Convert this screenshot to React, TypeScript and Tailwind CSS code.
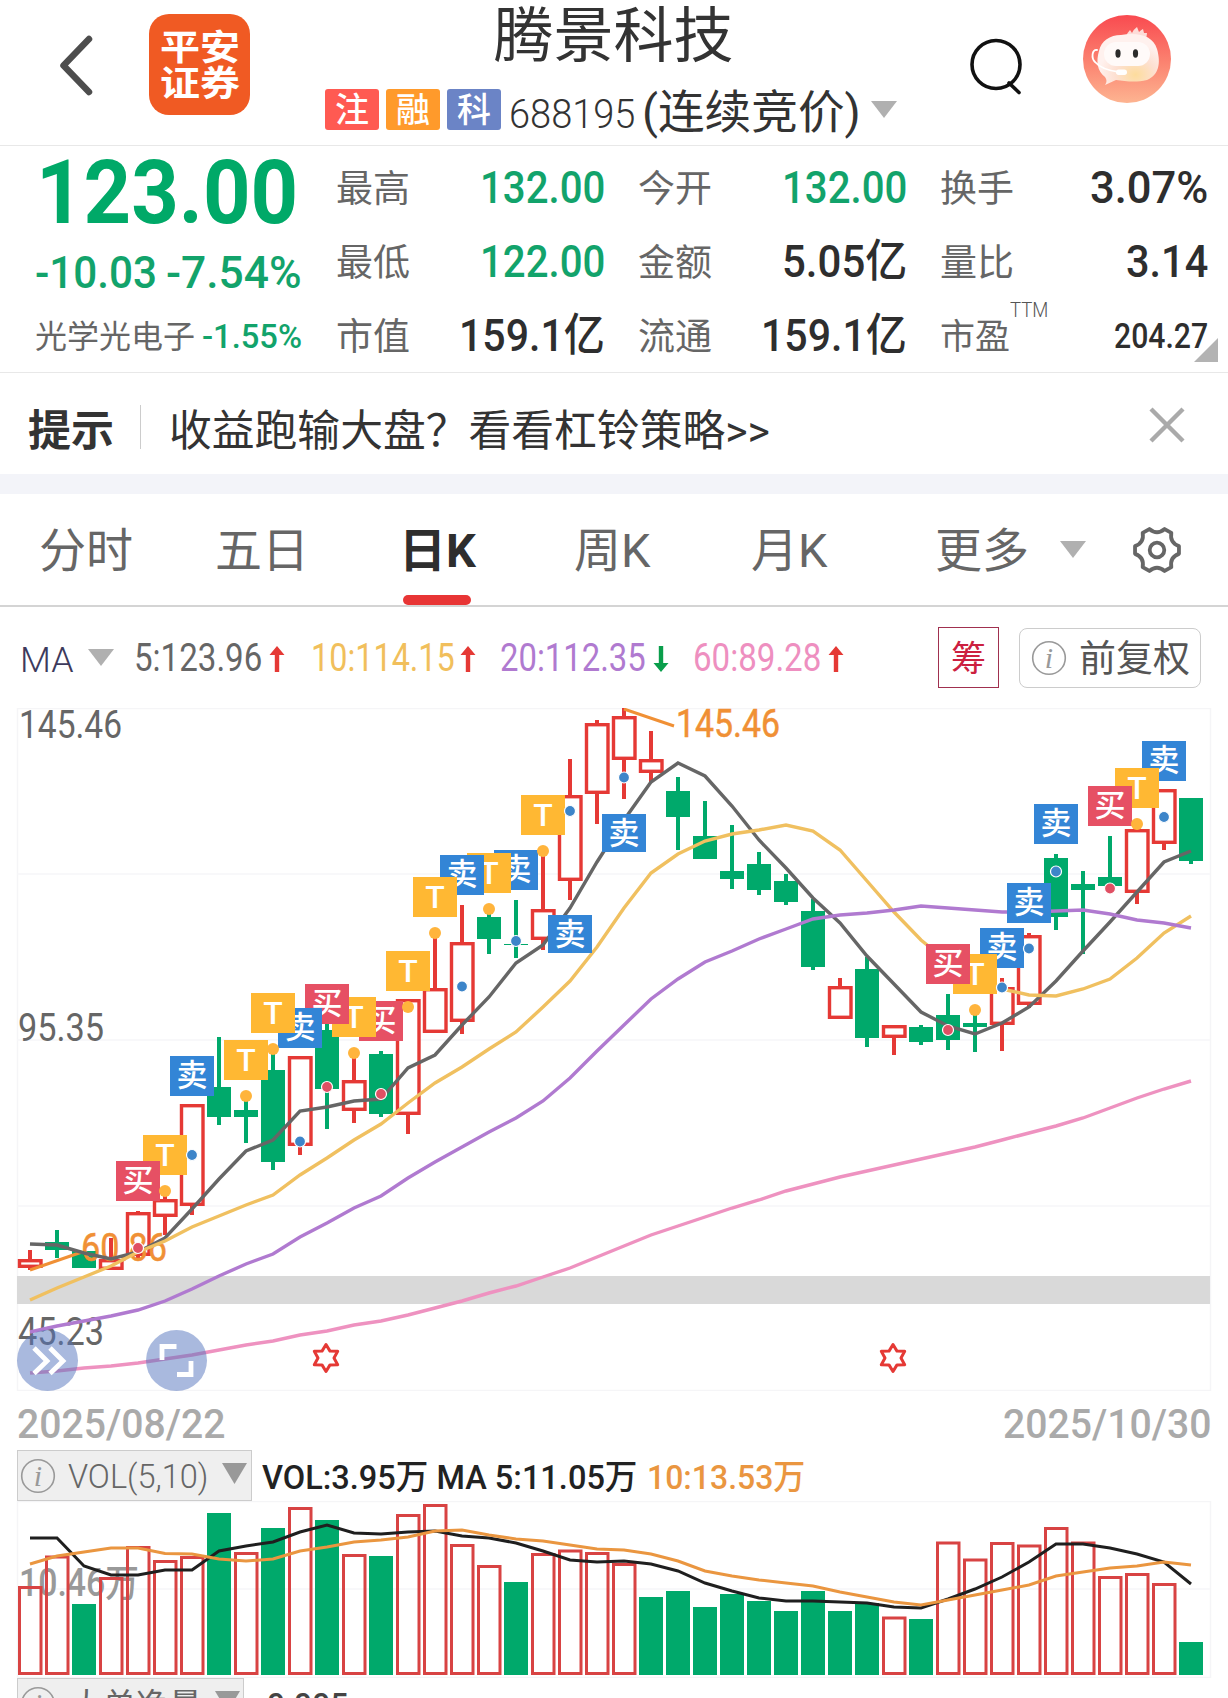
import React, { useLayoutEffect, useRef } from "react";

const FONT = 'Roboto, "Noto Sans CJK SC", sans-serif';

const RED = "#e53935";
const GREEN = "#00a96b";
const STEP = 27;
const FIRST_X = 30;

const cx = (i: number) => FIRST_X + i * STEP;

type Candle = ["r" | "g", number, number, number, number]; // color, body top, body bottom, high, low
type Mark = [number, "buy" | "sell" | "T", number, number?];

const candles: Candle[] = [
  ["r", 1259, 1268, 1250, 1270],
  ["g", 1242, 1250, 1230, 1258],
  ["g", 1251, 1268, 1251, 1268],
  ["r", 1259, 1270, 1238, 1270],
  ["r", 1212, 1256, 1211, 1258],
  ["r", 1199, 1217, 1190, 1235],
  ["r", 1104, 1206, 1104, 1215],
  ["g", 1087, 1117, 1037, 1125],
  ["g", 1110, 1117, 1096, 1143],
  ["g", 1070, 1162, 1049, 1170],
  ["r", 1056, 1146, 1056, 1155],
  ["g", 1030, 1089, 1024, 1129],
  ["r", 1080, 1111, 1053, 1123],
  ["g", 1054, 1114, 1051, 1117],
  ["r", 999, 1115, 999, 1134],
  ["r", 988, 1033, 933, 1033],
  ["r", 942, 1022, 905, 1034],
  ["g", 917, 939, 910, 954],
  ["g", 944, 945, 900, 958],
  ["r", 909, 940, 851, 950],
  ["r", 795, 881, 759, 900],
  ["r", 723, 794, 720, 824],
  ["r", 716, 760, 708, 799],
  ["r", 759, 773, 731, 782],
  ["g", 791, 817, 777, 850],
  ["g", 836, 859, 801, 859],
  ["g", 871, 879, 825, 889],
  ["g", 864, 890, 852, 895],
  ["g", 881, 902, 874, 905],
  ["g", 911, 967, 899, 970],
  ["r", 986, 1019, 978, 1019],
  ["g", 969, 1038, 957, 1047],
  ["r", 1025, 1038, 1025, 1055],
  ["g", 1027, 1042, 1025, 1045],
  ["g", 1015, 1040, 994, 1050],
  ["g", 1023, 1027, 1010, 1052],
  ["r", 987, 1025, 978, 1051],
  ["r", 935, 1005, 933, 1008],
  ["g", 858, 917, 854, 930],
  ["g", 884, 890, 871, 954],
  ["g", 877, 886, 836, 890],
  ["r", 829, 893, 824, 904],
  ["r", 789, 844, 789, 850],
  ["g", 798, 861, 798, 864],
];

const ma5 = [1244, 1245, 1253, 1259, 1252, 1238, 1209, 1179, 1151, 1140, 1111, 1107, 1101, 1099, 1068, 1055, 1025, 997, 963, 945, 908, 862, 820, 782, 763, 776, 806, 840, 868, 898, 923, 956, 984, 1012, 1026, 1034, 1023, 1007, 981, 951, 922, 892, 862, 851];
const ma10 = [1300, 1288, 1277, 1266, 1252, 1241, 1227, 1216, 1205, 1195, 1175, 1158, 1140, 1124, 1103, 1083, 1067, 1049, 1032, 1007, 981, 947, 908, 873, 854, 841, 834, 830, 825, 831, 850, 881, 912, 940, 962, 978, 989, 995, 996, 989, 979, 958, 933, 916];
const ma20 = [1332, 1326, 1321, 1316, 1310, 1301, 1289, 1276, 1264, 1254, 1237, 1223, 1208, 1196, 1178, 1162, 1147, 1132, 1118, 1101, 1078, 1051, 1025, 999, 979, 962, 951, 939, 929, 919, 915, 913, 910, 906, 908, 910, 912, 912, 911, 910, 914, 920, 923, 928];
const ma60 = [1373, 1371, 1368, 1366, 1363, 1359, 1355, 1350, 1345, 1341, 1335, 1331, 1325, 1321, 1315, 1308, 1301, 1293, 1286, 1277, 1268, 1257, 1246, 1235, 1226, 1217, 1208, 1200, 1191, 1184, 1177, 1171, 1165, 1159, 1153, 1147, 1140, 1133, 1126, 1118, 1108, 1098, 1089, 1081];

// candle index, kind, dot y
const dots: [number, "buy" | "sell" | "T", number][] = [
  [4, "buy", 1248], [5, "T", 1191], [6, "sell", 1155], [8, "T", 1096], [9, "T", 1049], [10, "sell", 1141.5],
  [11, "buy", 1087], [12, "T", 1053], [13, "buy", 1094], [14, "T", 1007], [15, "T", 933], [16, "sell", 986.5],
  [17, "T", 909], [18, "sell", 941], [19, "T", 851], [20, "sell", 811], [22, "sell", 777.5],
  [34, "buy", 1030], [35, "T", 1010], [36, "sell", 987.5], [37, "sell", 948.5], [38, "sell", 871.5],
  [40, "buy", 888.5], [41, "T", 824], [42, "sell", 817],
];

// candle index, kind, badge top, badge height; later ones lie on top
const marks: Mark[] = [
  [42, "sell", 741], [41, "T", 768], [40, "buy", 786], [38, "sell", 804], [37, "sell", 883],
  [36, "sell", 928], [35, "T", 954], [34, "buy", 944], [22, "sell", 814, 38], [20, "sell", 915, 38],
  [19, "T", 795], [18, "sell", 850], [17, "T", 853], [16, "sell", 855], [15, "T", 877], [14, "T", 951],
  [13, "buy", 1001], [12, "T", 997], [11, "buy", 984], [10, "sell", 1008], [9, "T", 993], [8, "T", 1040],
  [6, "sell", 1056], [5, "T", 1135], [4, "buy", 1161],
];

const dotColor = { buy: "#e05064", sell: "#3d85c9", T: "#ffb43c" };
const markColor = { buy: "#e65064", sell: "#3385d6", T: "#ffb833" };
const markText = { buy: "买", sell: "卖", T: "T" };

const volumeTop = [1586, 1555.5, 1604, 1577, 1546, 1560, 1556, 1513, 1552, 1528, 1507, 1520, 1554, 1556, 1514, 1504, 1544, 1565, 1582, 1553, 1549.5, 1552, 1563, 1597, 1591, 1607, 1594, 1601, 1611, 1591, 1611, 1603, 1616.5, 1619, 1541.5, 1558.5, 1542, 1544.5, 1527, 1541.5, 1576, 1573, 1583, 1642];
const volumeKind = "rrgrrrrgrgrgrgrrrrgrrrrgggggggggrgrrrrrrrrrg";
const vol5 = [1538, 1538, 1566, 1575, 1575, 1570, 1570, 1551, 1546, 1542, 1532, 1525, 1533, 1534, 1532, 1531, 1536, 1538, 1543, 1551, 1560, 1562, 1561, 1564, 1571, 1583, 1591, 1598, 1601, 1601, 1602, 1603, 1607, 1608, 1599, 1589, 1577, 1562, 1544, 1544, 1548, 1554, 1562, 1584];
const vol10 = [1564, 1556, 1552, 1548, 1548, 1553.5, 1554, 1559, 1561, 1559, 1551, 1547, 1542, 1540, 1537, 1531, 1530, 1535, 1539, 1541, 1545, 1549, 1550, 1554, 1561, 1571, 1576, 1580, 1583, 1586, 1592, 1597, 1602, 1605, 1600, 1595, 1590, 1585, 1576, 1572, 1568, 1566, 1562, 1565];

const toPoints = (ys: number[]) => ys.map((y, i) => `${cx(i)},${y}`).join(" ");

// one line of text squeezed to a given width
const Fit: React.FC<{ w: number; className?: string; children: string }> = ({ w, className = "", children }) => {
  const ref = useRef<HTMLSpanElement>(null);
  useLayoutEffect(() => {
    const el = ref.current;
    if (el) el.style.transform = `scaleX(${w / el.offsetWidth})`;
  }, [w, children]);
  return (
    <span className="inline-block shrink-0" style={{ width: w }}>
      <span ref={ref} className={`inline-block origin-left whitespace-pre leading-none ${className}`}>
        {children}
      </span>
    </span>
  );
};

const Triangle: React.FC<{ className?: string }> = ({ className = "" }) => (
  <svg viewBox="0 0 26 17" preserveAspectRatio="none" className={`shrink-0 ${className}`}>
    <path d="M0 0H26L13 17Z" fill="currentColor" />
  </svg>
);

const Info: React.FC<{ className?: string }> = ({ className = "" }) => (
  <svg viewBox="0 0 36 36" className={`h-9 w-9 shrink-0 ${className}`}>
    <circle cx="18" cy="18" r="16.3" fill="none" stroke="#999" strokeWidth="1.6" />
    <text x="18" y="27.5" textAnchor="middle" fontSize="30" fontStyle="italic" fill="#999" fontFamily='"Liberation Serif", serif'>
      i
    </text>
  </svg>
);

const Arrow: React.FC<{ down?: boolean }> = ({ down }) => (
  <svg viewBox="0 0 16 26" className={`h-[26px] w-4 shrink-0 ${down ? "rotate-180" : ""}`}>
    <path d="M8 0L15.5 9H10.2V26H5.8V9H0.5Z" fill={down ? "#0a9e4b" : RED} />
  </svg>
);

const gearPath = () => {
  const p = (deg: number, r: number) => {
    const a = (deg * Math.PI) / 180;
    return `${(25 + r * Math.cos(a)).toFixed(2)} ${(25 + r * Math.sin(a)).toFixed(2)}`;
  };
  let d = `M${p(-10, 22.3)}`;
  for (let t = 0; t < 360; t += 60) {
    d += `L${p(t + 10, 22.3)}Q${p(t + 30, 14.5)} ${p(t + 50, 22.3)}`;
  }
  return d + "Z";
};

const Robot = () => (
  <svg viewBox="0 0 88 88" className="h-[88px] w-[88px]">
    <defs>
      <linearGradient id="robotBg" x1="0" y1="0" x2="0" y2="1">
        <stop offset="0" stopColor="#f94a50" />
        <stop offset="0.55" stopColor="#fb8471" />
        <stop offset="1" stopColor="#fdb491" />
      </linearGradient>
      <radialGradient id="robotFace" cx="0.62" cy="0.8" r="0.6">
        <stop offset="0" stopColor="#fddc9c" />
        <stop offset="0.55" stopColor="#fde0d2" />
        <stop offset="1" stopColor="#fff1ee" />
      </radialGradient>
    </defs>
    <circle cx="44" cy="44" r="44" fill="url(#robotBg)" />
    <path d="M43 21Q45 17 47 15L49 18Q51 14 54 12L56 17Q58 15 60 14L61 18L64 18Q64 22 62 25Z" fill="#fddcd8" />
    <path d="M38 20C56 17 70 21 74 34C78 48 76 60 64 65C52 68 42 66 33 65L22 70Q25 66 22 62C14 56 13 46 16 36C18 26 27 20 38 20Z" fill="url(#robotFace)" />
    <rect x="21" y="27" width="46" height="24" rx="12" fill="#fffaf9" />
    <ellipse cx="35" cy="38.5" rx="2.6" ry="4.2" fill="#2b2b2b" />
    <ellipse cx="52.5" cy="38.5" rx="2.6" ry="4.2" fill="#2b2b2b" />
    <path d="M14 35C9 34 8 43 12 47C18 54 28 56 36 57" fill="none" stroke="#fff" strokeWidth="1.8" strokeLinecap="round" />
    <rect x="33" y="54.5" width="11" height="5.5" rx="2.7" fill="#fff" />
  </svg>
);

const Header = () => (
  <header className="flex h-[146px] border-b border-[#e8e8e8]">
    <div className="flex w-[325px] items-start">
      <svg viewBox="0 0 40 64" className="ml-[56px] mt-[34px] h-16 w-10">
        <path d="M33 5L7.5 31.5L33 58" fill="none" stroke="#4d4d4d" strokeWidth="6.5" strokeLinecap="round" strokeLinejoin="round" />
      </svg>
      <div className="ml-[53px] mt-[14px] flex h-[101px] w-[101px] items-center justify-center rounded-[20px] bg-[#f05a23]">
        <div className="scale-y-[0.88] pt-[3px] pl-px text-[40px] font-bold leading-[41px] text-white">
          <div>平安</div>
          <div>证券</div>
        </div>
      </div>
    </div>
    <div className="flex w-[577px] flex-col">
      <div className="flex h-[74px] justify-center pt-0.5 text-[60px] leading-[70px] text-[#333]">腾景科技</div>
      <div className="flex h-[71px] items-center">
        <div className="flex gap-[7px] text-[34px] font-medium leading-[43px] text-white">
          <span className="flex h-[41px] w-[54px] justify-center rounded-[3px] bg-[#ff5a52]">注</span>
          <span className="flex h-[41px] w-[54px] justify-center rounded-[3px] bg-[#ff9a2b]">融</span>
          <span className="flex h-[41px] w-[54px] justify-center rounded-[3px] bg-[#6b84c6]">科</span>
        </div>
        <div className="ml-[8px] flex items-center pt-[9px]">
          <Fit w={126} className="text-[41px] font-light text-[#333]">688195</Fit>
        </div>
        <div className="ml-[7px] flex items-center pt-[5px]">
          <Fit w={219} className="text-[46px] text-[#333]">(连续竞价)</Fit>
        </div>
        <Triangle className="ml-[10px] h-[17px] w-[26px] text-[#b0b0b0]" />
      </div>
    </div>
    <div className="flex flex-1 items-start">
      <svg viewBox="0 0 60 60" className="ml-[65px] mt-[36px] h-[60px] w-[60px]">
        <circle cx="29" cy="28.5" r="24" fill="none" stroke="#111" strokeWidth="3.6" />
        <path d="M42 47L52 56.5" stroke="#111" strokeWidth="3.6" strokeLinecap="round" />
      </svg>
      <div className="ml-[56px] mt-[15px]">
        <Robot />
      </div>
    </div>
  </header>
);

interface CellProps {
  label: string;
  value: string;
  w: number;
  green?: boolean;
}

const Cell: React.FC<CellProps> = ({ label, value, w, green }) => (
  <div className="flex h-[74px] items-center justify-between">
    <span className="pt-1 text-[37px] leading-none text-[#666]">{label}</span>
    <Fit w={w} className={`text-[45px] font-medium ${green ? "text-[#12a36b]" : "text-[#2e2e2e]"}`}>
      {value}
    </Fit>
  </div>
);

const Quote = () => (
  <section className="flex h-[227px] border-b border-[#e8e8e8]">
    <div className="flex w-[336px] flex-col pl-[35px]">
      <div className="flex h-[91px] items-center pl-px pt-0.5">
        <Fit w={262} className="text-[89px] font-bold text-[#00a968]">123.00</Fit>
      </div>
      <div className="flex h-[70px] items-center gap-[9px]">
        <Fit w={122} className="text-[45px] font-medium text-[#12a36b]">-10.03</Fit>
        <Fit w={136} className="text-[45px] font-medium text-[#12a36b]">-7.54%</Fit>
      </div>
      <div className="flex h-[58px] items-center gap-[7px] pt-0.5">
        <span className="text-[32px] leading-none text-[#666]">光学光电子</span>
        <Fit w={100} className="text-[34px] font-medium text-[#12a36b]">-1.55%</Fit>
      </div>
    </div>
    <div className="w-[269px] pt-[4px]">
      <Cell label="最高" value="132.00" w={125} green />
      <Cell label="最低" value="122.00" w={125} green />
      <Cell label="市值" value="159.1亿" w={146} />
    </div>
    <div className="ml-[33px] w-[269px] pt-[4px]">
      <Cell label="今开" value="132.00" w={125} green />
      <Cell label="金额" value="5.05亿" w={125} />
      <Cell label="流通" value="159.1亿" w={146} />
    </div>
    <div className="ml-[33px] w-[268px] pt-[4px]">
      <Cell label="换手" value="3.07%" w={118} />
      <Cell label="量比" value="3.14" w={82} />
      <div className="flex h-[74px] items-center pt-1">
        <span className="text-[35px] leading-none text-[#666]">市盈</span>
        <div className="mb-[50px]">
          <Fit w={38} className="text-xl font-light text-[#555]">TTM</Fit>
        </div>
        <div className="ml-auto">
          <Fit w={94} className="text-[35px] font-medium text-[#2e2e2e]">204.27</Fit>
        </div>
      </div>
    </div>
    <svg viewBox="0 0 24 24" className="-ml-[14px] mb-[10px] h-6 w-6 self-end">
      <path d="M24 0V24H0Z" fill="#b3b3b3" />
    </svg>
  </section>
);

const Notice = () => (
  <section className="flex h-[101px] items-center pl-7 pt-4">
    <span className="text-[43px] font-bold leading-none text-[#333]">提示</span>
    <span className="-mt-[10px] ml-[26px] h-[44px] w-px bg-[#ccc]" />
    <div className="ml-[28px] flex">
      <Fit w={601} className="text-[43px] text-[#333]">{"收益跑输大盘？看看杠铃策略>>"}</Fit>
    </div>
    <svg viewBox="0 0 40 40" className="-mt-[14px] ml-[377px] h-10 w-10">
      <path d="M4 4L36 36M36 4L4 36" stroke="#aaa" strokeWidth="4.4" />
    </svg>
  </section>
);

const Tabs = () => (
  <nav className="flex h-[113px] items-center border-b-2 border-[#d4d4d4] text-[47px] leading-none text-[#666]">
    <span className="ml-[39px] w-[176px] pt-0.5">分时</span>
    <span className="w-[184px] pt-0.5">五日</span>
    <div className="relative flex h-full w-[175px] items-center pt-0.5 font-bold text-[#2e2e2e]">
      日K
      <span className="absolute bottom-0 left-[4px] h-[10px] w-[68px] rounded-[5px] bg-[#e83535]" />
    </div>
    <span className="w-[177px] pt-0.5">周K</span>
    <span className="w-[184px] pt-0.5">月K</span>
    <span className="pt-0.5">更多</span>
    <Triangle className="ml-[31px] h-[17px] w-[26px] text-[#b0b0b0]" />
    <svg viewBox="0 0 50 50" className="ml-[46px] h-[50px] w-[50px]">
      <path d={gearPath()} fill="none" stroke="#666" strokeWidth="3.8" strokeLinejoin="round" />
      <circle cx="25" cy="25" r="7.3" fill="none" stroke="#666" strokeWidth="3.8" />
    </svg>
  </nav>
);

const MaRow = () => (
  <section className="flex h-[101px] items-center pl-[20px] text-[38px]">
    <div className="flex pt-1">
      <Fit w={53} className="text-[35px] font-light text-[#3d3a5c]">MA</Fit>
    </div>
    <Triangle className="ml-[15px] h-[17px] w-[26px] text-[#b0b0b0]" />
    <div className="ml-[20px] flex items-center gap-[7px] pt-0.5 text-[#666]">
      <Fit w={128}>5:123.96</Fit>
      <Arrow />
    </div>
    <div className="ml-[26px] flex items-center gap-[5px] pt-0.5 text-[#f1bf5c]">
      <Fit w={144}>10:114.15</Fit>
      <Arrow />
    </div>
    <div className="ml-[24px] flex items-center gap-[7px] pt-0.5 text-[#b07ad0]">
      <Fit w={146}>20:112.35</Fit>
      <Arrow down />
    </div>
    <div className="ml-[24px] flex items-center gap-[7px] pt-0.5 text-[#ee8fc0]">
      <Fit w={128}>60:89.28</Fit>
      <Arrow />
    </div>
    <span className="ml-[94px] flex h-[61px] w-[61px] items-center justify-center border border-[#a0304f] pt-1 text-[35px] leading-none text-[#cc2040]">
      筹
    </span>
    <div className="ml-[20px] flex h-[60px] w-[182px] items-center rounded-lg border border-[#ccc] pl-[11px]">
      <Info />
      <span className="ml-[12px] pt-1 text-[37px] leading-none text-[#555]">前复权</span>
    </div>
  </section>
);

const star = (x: number, y: number) => {
  const pts = [];
  for (let i = 0; i < 12; i++) {
    const r = i % 2 ? 8 : 13.5;
    const a = (i * Math.PI) / 6 - Math.PI / 2;
    pts.push(`${(x + r * Math.cos(a)).toFixed(1)},${(y + r * Math.sin(a)).toFixed(1)}`);
  }
  return pts.join(" ");
};

const PriceChart = () => (
  <svg viewBox="0 708 1228 683" className="block h-[683px] w-full" fontFamily={FONT}>
    <rect x="17.5" y="708.5" width="1193" height="682" fill="none" stroke="#f5f5f7" strokeWidth="1.5" />
    {[874, 1040, 1206].map((y) => (
      <path key={y} d={`M17 ${y}H1210`} stroke="#f6f6f8" strokeWidth="1.5" />
    ))}
    <rect x="17" y="1276" width="1193" height="28" fill="#d9d9d9" />
    <g fontSize="38" fill="#666">
      <text x="19" y="738" textLength="103" lengthAdjust="spacingAndGlyphs">145.46</text>
      <text x="18" y="1041" textLength="86" lengthAdjust="spacingAndGlyphs">95.35</text>
      <text x="18" y="1345" textLength="86" lengthAdjust="spacingAndGlyphs">45.23</text>
    </g>
    {candles.map(([kind, top, bottom, high, low], i) => {
      const x = cx(i);
      if (kind === "g") {
        return (
          <g key={i} fill={GREEN}>
            <rect x={x - 2} y={high} width="4" height={low - high} />
            <rect x={x - 12} y={top} width="24" height={bottom - top} />
          </g>
        );
      }
      return (
        <g key={i} stroke={RED} strokeWidth="3.4">
          <path d={`M${x} ${high}V${top + 1}M${x} ${bottom - 1}V${low}`} strokeWidth="4" />
          <rect x={x - 10.5} y={top + 1.7} width="21.5" height={bottom - top - 3.4} fill="#fff" />
        </g>
      );
    })}
    <g fill="none" stroke="#f09035" strokeWidth="3">
      <path d="M30 1270L82 1252" />
      <path d="M624 709L674 726" />
    </g>
    <g fontSize="38" fill="#f09035" stroke="#f09035" strokeWidth="0.5">
      <text x="81" y="1261" textLength="86" lengthAdjust="spacingAndGlyphs">60.86</text>
      <text x="676" y="737" textLength="104" lengthAdjust="spacingAndGlyphs">145.46</text>
    </g>
    <g fill="none" strokeWidth="3.4">
      <polyline points={toPoints(ma5)} stroke="#666" />
      <polyline points={toPoints(ma10)} stroke="#f0c060" />
      <polyline points={toPoints(ma20)} stroke="#b07ad0" />
      <polyline points={toPoints(ma60)} stroke="#ee92c0" />
    </g>
    {marks.map(([i, kind, top, h = 40]) => (
      <g key={i}>
        <rect x={cx(i) - 22} y={top} width="44" height={h} fill={markColor[kind]} />
        <text x={cx(i)} y={top + (kind === "T" ? 31 : 30)} fontSize={kind === "T" ? 32 : 31} fontWeight="500" fill="#fff" textAnchor="middle">
          {markText[kind]}
        </text>
      </g>
    ))}
    {dots.map(([i, kind, y]) => (
      <circle key={i} cx={cx(i)} cy={y} r={kind === "T" ? 6 : 5.5} fill={dotColor[kind]} stroke="#fff" strokeWidth={kind === "T" ? 0 : 1.2} />
    ))}
    <polygon points={star(326, 1358)} fill="none" stroke={RED} strokeWidth="3" strokeLinejoin="round" />
    <polygon points={star(893, 1358)} fill="none" stroke={RED} strokeWidth="3" strokeLinejoin="round" />
    <circle cx="47.5" cy="1360.5" r="30.5" fill="#5474be" fillOpacity="0.5" />
    <circle cx="176.5" cy="1360.5" r="30.5" fill="#5474be" fillOpacity="0.5" />
    <g fill="none" stroke="#fff" strokeWidth="4.8">
      <path d="M34 1348L47 1361L34 1373.5" />
      <path d="M50 1348L63 1361L50 1373.5" />
      <path d="M162 1360V1346.5H176.5" />
      <path d="M177 1374.5H191V1361" />
    </g>
  </svg>
);

const VolumeChart = () => (
  <svg viewBox="0 1501 1228 177" className="block h-[177px] w-full" fontFamily={FONT}>
    <rect x="17.5" y="1501.5" width="1193" height="176" fill="none" stroke="#f5f5f7" strokeWidth="1.5" />
    <path d="M17 1589H1210" stroke="#f6f6f8" strokeWidth="1.5" />
    <text x="19" y="1596" fontSize="38" fontWeight="500" fill="#999" textLength="120" lengthAdjust="spacingAndGlyphs">10.46万</text>
    {volumeTop.map((top, i) =>
      volumeKind[i] === "g" ? (
        <rect key={i} x={cx(i) - 12} y={top} width="24" height={1675 - top} fill={GREEN} />
      ) : (
        <rect key={i} x={cx(i) - 10.5} y={top + 1.5} width="21.5" height={1672 - top} fill="none" stroke="#d84343" strokeWidth="3" />
      )
    )}
    <polyline points={toPoints(vol5)} fill="none" stroke="#1f1f1f" strokeWidth="3" />
    <polyline points={toPoints(vol10)} fill="none" stroke="#ea9640" strokeWidth="3" />
  </svg>
);

const App: React.FC = () => {
  return (
    <div className="h-[1698px] w-[1228px] overflow-hidden bg-white font-[Roboto,'Noto_Sans_CJK_SC',sans-serif]">
      <Header />
      <Quote />
      <Notice />
      <div className="h-5 bg-[#f3f4f9]" />
      <Tabs />
      <MaRow />
      <PriceChart />
      <div className="flex h-[59px] items-center justify-between pl-[17px] pr-[17px] pt-[7px] text-[#aaa]">
        <Fit w={208} className="text-[41px] font-medium">2025/08/22</Fit>
        <Fit w={208} className="text-[41px] font-medium">2025/10/30</Fit>
      </div>
      <div className="flex h-[51px] items-center pl-[17px]">
        <div className="flex h-[51px] w-[235px] items-center border border-[#ccc] bg-[#efefef] pl-[2px]">
          <Info />
          <div className="ml-[12px] flex pt-1 text-[#666]">
            <Fit w={140} className="text-[33px] font-light">VOL(5,10)</Fit>
          </div>
          <Triangle className="mb-1 ml-[14px] h-[21px] w-[25px] text-[#999]" />
        </div>
        <div className="ml-[10px] flex gap-[10px] pt-[5px]">
          <Fit w={375} className="text-[34px] font-medium text-[#222]">VOL:3.95万 MA 5:11.05万</Fit>
          <Fit w={158} className="text-[34px] font-medium text-[#ea9640]">10:13.53万</Fit>
        </div>
      </div>
      <VolumeChart />
      <div className="flex h-[51px] items-center pl-[17px]">
        <div className="flex h-[51px] w-[227px] items-center border border-[#ccc] bg-[#efefef] pl-[2px]">
          <Info />
          <span className="ml-[14px] pt-1 text-[33px] leading-none text-[#666]">大单净量</span>
          <Triangle className="mb-1 ml-[13px] h-[21px] w-[25px] text-[#999]" />
        </div>
        <div className="ml-[12px] flex pt-1">
          <Fit w={92} className="text-[34px] font-medium text-[#444]">-0.005</Fit>
        </div>
      </div>
    </div>
  );
};

export default App;
